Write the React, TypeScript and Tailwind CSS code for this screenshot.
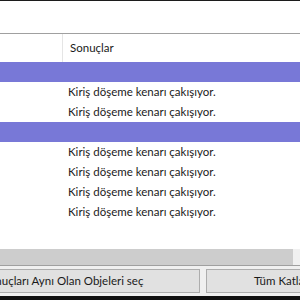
import React from "react";

const MSG = "Kiriş döşeme kenarı çakışıyor.";

function Row({ purple, text }: { purple?: boolean; text?: string }) {
  return (
    <div className={`h-[20px] flex items-center ${purple ? "bg-[#7878d7]" : "bg-white"}`}>
      <div className="w-[68px] shrink-0" />
      {text ? <span className="text-[#1a1a1a]">{text}</span> : null}
    </div>
  );
}

export default function App() {
  return (
    <div
      className="w-[300px] h-[300px] overflow-hidden bg-white flex flex-col text-[11.5px] leading-none"
      style={{ fontFamily: 'Lato, "Noto Sans", Arial, sans-serif' }}
    >
      <div className="h-[1px] bg-[#1c1c1c] shrink-0" />
      <div className="h-[32px] shrink-0 bg-white" />
      <div className="h-[1px] bg-[#a0a0a0] shrink-0" />
      <div className="h-[28px] flex shrink-0 bg-white">
        <div className="w-[63px] border-r border-[#e5e5e5]" />
        <div className="flex items-center pl-[7px] text-[#1a1a1a]">Sonuçlar</div>
      </div>
      <Row purple />
      <Row text={MSG} />
      <Row text={MSG} />
      <Row purple />
      <Row text={MSG} />
      <Row text={MSG} />
      <Row text={MSG} />
      <Row text={MSG} />
      <div className="flex-1 bg-white" />
      <div className="h-[16px] shrink-0 flex bg-[#f0f0f0]">
        <div className="w-[293px] bg-[#cdcdcd]" />
      </div>
      <div className="h-[1px] bg-[#a0a0a0] shrink-0" />
      <div className="h-[30px] shrink-0 bg-[#f0f0f0] flex items-start pt-[3px] gap-[6px] overflow-hidden">
        <div className="ml-[-74px] w-[274px] h-[24px] shrink-0 border border-[#adadad] bg-[#e1e1e1] flex items-center justify-center text-[#1a1a1a] whitespace-nowrap">
          Sonuçları Aynı Olan Objeleri seç
        </div>
        <div className="w-[200px] h-[24px] shrink-0 border border-[#adadad] bg-[#e1e1e1] flex items-center pl-[47px] text-[#1a1a1a] whitespace-nowrap">
          Tüm Katlara Uygula
        </div>
      </div>
      <div className="h-[4px] shrink-0 bg-[#101010]" />
    </div>
  );
}
